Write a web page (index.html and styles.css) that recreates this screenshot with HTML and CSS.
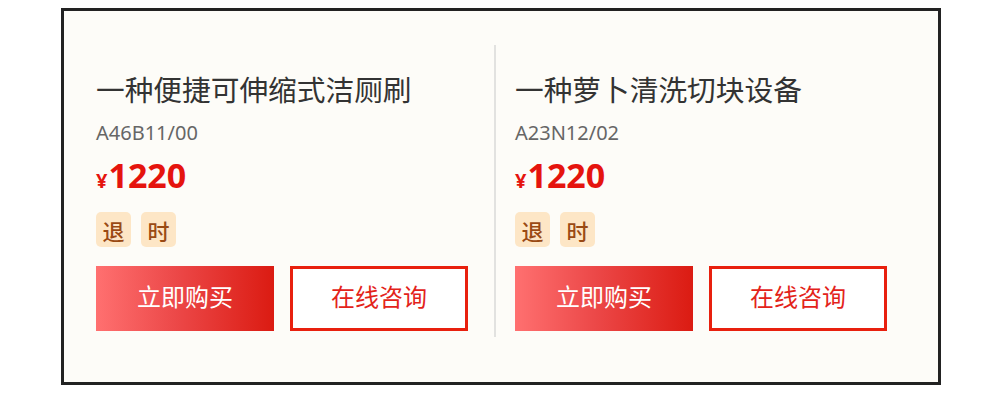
FILE: index.html
```html
<!DOCTYPE html>
<html lang="zh">
<head>
<meta charset="utf-8">
<link rel="stylesheet" href="styles.css">
</head>
<body>
<div class="panel">
  <div class="card">
    <div class="title">一种便捷可伸缩式洁厕刷</div>
    <div class="code">A46B11/00</div>
    <div class="price"><span class="yen">¥</span><span class="num">1220</span></div>
    <div class="tags"><span class="tag">退</span><span class="tag">时</span></div>
    <div class="actions"><button class="btn buy">立即购买</button><button class="btn consult">在线咨询</button></div>
  </div>
  <div class="card second">
    <div class="title">一种萝卜清洗切块设备</div>
    <div class="code">A23N12/02</div>
    <div class="price"><span class="yen">¥</span><span class="num">1220</span></div>
    <div class="tags"><span class="tag">退</span><span class="tag">时</span></div>
    <div class="actions"><button class="btn buy">立即购买</button><button class="btn consult">在线咨询</button></div>
  </div>
</div>
</body>
</html>
```

FILE: styles.css
```css
html, body {
  margin: 0;
  padding: 0;
  background: #ffffff;
}
body {
  font-family: "Noto Sans", "Noto Sans CJK SC", sans-serif;
}
.panel {
  box-sizing: border-box;
  margin: 8px 0 0 61px;
  width: 880px;
  height: 377px;
  border: 3px solid #222222;
  background: #fdfcf8;
  display: flex;
  align-items: flex-start;
  padding: 34px 0 0 32px;
}
.card {
  width: 398px;
  padding-bottom: 6px;
  display: flex;
  flex-direction: column;
}
.card.second {
  border-left: 2px solid #e2e2e0;
  padding-left: 19px;
}
.title {
  margin-top: 24px;
  font-family: "Noto Sans CJK SC", sans-serif;
  font-size: 28.7px;
  line-height: 40px;
  color: #333333;
  white-space: nowrap;
}
.code {
  margin-top: 10px;
  font-size: 20px;
  line-height: 28px;
  color: #666666;
}
.price {
  margin-top: 8px;
  line-height: 40px;
  height: 40px;
  color: #e5140e;
  display: flex;
  align-items: baseline;
}
.yen {
  font-size: 20px;
  font-weight: 700;
  margin-right: 1px;
}
.num {
  font-size: 34px;
  font-weight: 700;
}
.tags {
  margin-top: 17px;
  display: flex;
  gap: 10px;
}
.tag {
  width: 35px;
  height: 35px;
  border-radius: 5px;
  background: #fde6c6;
  color: #9a4a14;
  font-family: "Noto Sans CJK SC", sans-serif;
  font-size: 22px;
  font-weight: 500;
  display: flex;
  align-items: center;
  justify-content: center;
}
.actions {
  margin-top: 19px;
  display: flex;
  gap: 16px;
}
.btn {
  box-sizing: border-box;
  width: 178px;
  height: 65px;
  margin: 0;
  font-family: "Noto Sans CJK SC", sans-serif;
  font-size: 24px;
  line-height: 1;
  cursor: pointer;
  padding: 0 0 5px 0;
}
.buy {
  border: none;
  color: #ffffff;
  background: linear-gradient(90deg, #ff7070 0%, #ec4848 45%, #db1b12 100%);
}
.consult {
  border: 3px solid #e8200e;
  background: #ffffff;
  color: #e3231a;
}
```
